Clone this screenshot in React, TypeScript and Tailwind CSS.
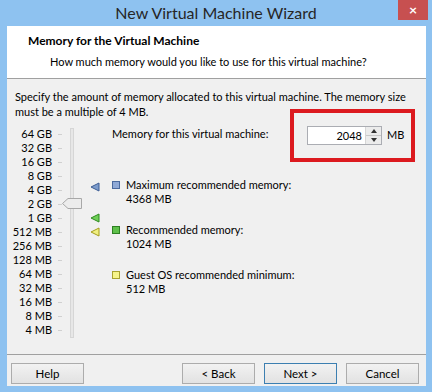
import React from 'react';

const scale = [
  '64 GB', '32 GB', '16 GB', '8 GB', '4 GB', '2 GB', '1 GB',
  '512 MB', '256 MB', '128 MB', '64 MB', '32 MB', '16 MB', '8 MB', '4 MB',
];

function Marker({ fill, stroke }: { fill: string; stroke: string }) {
  return (
    <svg width="10" height="10" viewBox="0 0 10 10">
      <polygon points="1,5 9,1 9,9" fill={fill} stroke={stroke} strokeWidth="1" />
    </svg>
  );
}

function Legend({ color, border, label, value }: { color: string; border: string; label: string; value: string }) {
  return (
    <div className="flex">
      <div className="w-[14px] pt-[3px]">
        <div className={`w-[8px] h-[8px] border ${color} ${border}`} />
      </div>
      <div className="leading-[14px]">
        <div>{label}</div>
        <div>{value}</div>
      </div>
    </div>
  );
}

function Btn({ children, primary }: { children: React.ReactNode; primary?: boolean }) {
  return (
    <button
      className={`h-[21px] w-[73px] text-[11.5px] bg-gradient-to-b from-[#f2f2f2] to-[#e2e2e2] border ${
        primary ? 'border-[#3c7fb1]' : 'border-[#acacac]'
      }`}
    >
      {children}
    </button>
  );
}

export default function App() {
  return (
    <div
      className="w-[432px] h-[392px] bg-[#8ec2f0] flex flex-col text-black text-[11px]"
      style={{ fontFamily: 'Lato, "Liberation Sans", sans-serif' }}
    >
      {/* title bar */}
      <div className="relative h-[26px] flex items-center justify-center">
        <span className="text-[16px] text-[#262626]">New Virtual Machine Wizard</span>
        <div className="absolute top-0 right-[4px] w-[30px] h-[20px] bg-[#c75050] flex items-center justify-center text-white text-[14px] font-bold leading-none">
          ×
        </div>
      </div>

      <div className="flex-1 ml-[7px] mr-[6px] mb-[6px] flex flex-col bg-[#f0f0f0]">
        {/* header */}
        <div className="h-[53px] bg-white border-b border-[#a0a0a0] pl-[21px] pt-[6px]">
          <div className="font-bold text-[12px] leading-[18px]">Memory for the Virtual Machine</div>
          <div className="pl-[22px] mt-[3px] leading-[18px]">How much memory would you like to use for this virtual machine?</div>
        </div>

        {/* body */}
        <div className="flex-1 flex flex-col">
          <div className="pl-[8px] pt-[10px] pr-[6px] leading-[15px]">
            Specify the amount of memory allocated to this virtual machine. The memory size must be a multiple of 4 MB.
          </div>

          <div className="flex mt-[8px]">
            {/* scale */}
            <div className="flex flex-col w-[55px]">
              {scale.map((s) => (
                <div key={s} className="h-[14px] flex items-center justify-end">
                  <span className="leading-[14px]">{s}</span>
                  <span className="ml-[6px] w-[4px] h-px bg-[#d0d0d0]" />
                </div>
              ))}
            </div>
            {/* track */}
            <div className="relative w-[20px] h-[211px]">
              <div className="absolute left-[8px] top-[1px] bottom-0 w-[4px] border border-[#d6d6d6] bg-[#e7e7e7]" />
              <svg className="absolute left-0 top-[71px]" width="20" height="11" viewBox="0 0 20 11">
                <polygon points="0.5,5.5 6,0.5 19.5,0.5 19.5,10.5 6,10.5" fill="#ececec" stroke="#a8a8a8" />
              </svg>
            </div>
            {/* markers */}
            <div className="w-[30px] pl-[8px] flex flex-col">
              <div className="h-[56px]" />
              <div className="h-[14px] -mt-[3px] flex items-center">
                <Marker fill="#7d9ccc" stroke="#3d5d94" />
              </div>
              <div className="h-[14px] mt-[3px]" />
              <div className="h-[14px] flex items-center">
                <Marker fill="#6fcf57" stroke="#2d8b1f" />
              </div>
              <div className="h-[14px] flex items-center">
                <Marker fill="#f0ef80" stroke="#a49d1c" />
              </div>
            </div>

            {/* right */}
            <div className="flex-1 flex flex-col">
              <div className="flex items-start">
                <div className="leading-[14px] w-[178px]">Memory for this virtual machine:</div>
                <div className="-mt-[18px] w-[125px] h-[53px] border-[4px] border-[#dc1a1f] flex items-center pl-[13px]">
                  <div className="flex h-[19px] border border-[#abadb3] bg-white">
                    <div className="w-[57px] text-right pr-[3px] leading-[17px]">2048</div>
                    <div className="w-[16px] flex flex-col border-l border-[#d6d6d6]">
                      <div className="flex-1 flex items-center justify-center bg-[#ececec] border-b border-[#c8c8c8]">
                        <svg width="6" height="4" viewBox="0 0 6 4"><polygon points="0,4 3,0 6,4" fill="#333" /></svg>
                      </div>
                      <div className="flex-1 flex items-center justify-center bg-[#ececec]">
                        <svg width="6" height="4" viewBox="0 0 6 4"><polygon points="0,0 6,0 3,4" fill="#333" /></svg>
                      </div>
                    </div>
                  </div>
                  <span className="ml-[5px]">MB</span>
                </div>
              </div>
              <div className="mt-[16px] flex flex-col gap-[17px]">
                <Legend color="bg-[#8fa9d6]" border="border-[#4b6a9e]" label="Maximum recommended memory:" value="4368 MB" />
                <Legend color="bg-[#5ec04a]" border="border-[#2e7f22]" label="Recommended memory:" value="1024 MB" />
                <Legend color="bg-[#f6f48a]" border="border-[#a8a230]" label="Guest OS recommended minimum:" value="512 MB" />
              </div>
            </div>
          </div>

          {/* footer */}
          <div className="mt-auto border-t border-[#a0a0a0] h-[32px] flex items-start pt-[8px] px-[4px]">
            <Btn>Help</Btn>
            <div className="flex-1" />
            <div className="flex gap-[9px] mr-[3px]">
              <Btn>&lt; Back</Btn>
              <Btn primary>Next &gt;</Btn>
              <Btn>Cancel</Btn>
            </div>
          </div>
        </div>
      </div>
    </div>
  );
}
